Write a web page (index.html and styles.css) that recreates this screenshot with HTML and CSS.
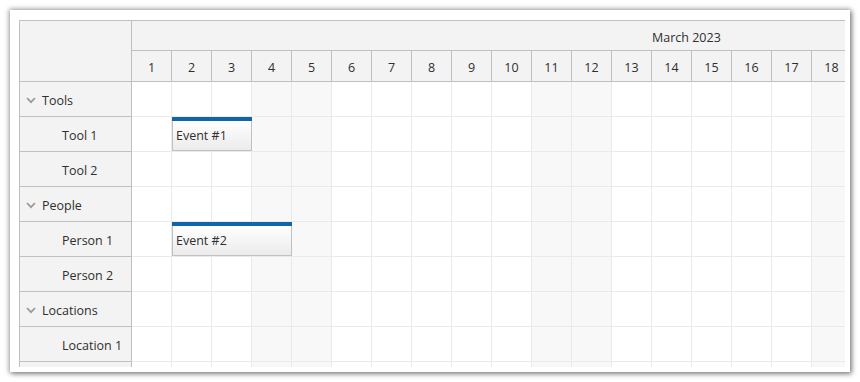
FILE: index.html
```html
<!DOCTYPE html>
<html lang="en">
<head>
    <meta charset="UTF-8">
    <title>Scheduler</title>
    <link rel="stylesheet" href="styles.css">
</head>
<body>
    <div class="card">
        <div class="scheduler">
            <div class="header">
                <div class="corner"></div>
                <div class="timeline">
                    <div class="month">March 2023</div>
                    <div class="days" id="days"></div>
                </div>
            </div>
            <div id="rows"></div>
        </div>
    </div>
    <script>
        const resources = [
            { name: 'Tools', group: true },
            { name: 'Tool 1', event: { text: 'Event #1', start: 2, days: 2 } },
            { name: 'Tool 2' },
            { name: 'People', group: true },
            { name: 'Person 1', event: { text: 'Event #2', start: 2, days: 3 } },
            { name: 'Person 2' },
            { name: 'Locations', group: true },
            { name: 'Location 1' },
            { name: '' }
        ];
        const dayCount = 18;
        const weekend = [4, 5, 11, 12, 18];
        const chevron = '<svg class="chevron" width="10" height="7" viewBox="0 0 10 7"><polyline points="1,1 5,5.2 9,1" fill="none" stroke="#9a9a9a" stroke-width="1.8"/></svg>';

        const daysEl = document.getElementById('days');
        for (let d = 1; d <= dayCount; d++) {
            const el = document.createElement('div');
            el.className = 'day';
            el.textContent = d;
            daysEl.appendChild(el);
        }

        const rowsEl = document.getElementById('rows');
        resources.forEach(r => {
            const row = document.createElement('div');
            row.className = 'row';
            const head = document.createElement('div');
            head.className = r.group ? 'rowhead group' : 'rowhead child';
            head.innerHTML = (r.group ? chevron : '') + '<span>' + r.name + '</span>';
            row.appendChild(head);

            const cells = document.createElement('div');
            cells.className = 'cells';
            for (let d = 1; d <= dayCount; d++) {
                const c = document.createElement('div');
                c.className = weekend.includes(d) ? 'cell weekend' : 'cell';
                cells.appendChild(c);
            }
            if (r.event) {
                const ev = document.createElement('div');
                ev.className = 'event';
                ev.style.left = ((r.event.start - 1) * 40) + 'px';
                ev.style.width = (r.event.days * 40) + 'px';
                ev.innerHTML = '<div class="bar"></div><div class="text">' + r.event.text + '</div>';
                cells.appendChild(ev);
            }
            row.appendChild(cells);
            rowsEl.appendChild(row);
        });
    </script>
</body>
</html>
```

FILE: styles.css
```css
body {
    margin: 0;
    padding: 10px;
    background: #fff;
    font-family: 'Open Sans', 'Noto Sans', sans-serif;
    font-size: 12.5px;
    color: #2f2f2f;
}
.card {
    width: 840px;
    height: 362px;
    box-sizing: border-box;
    padding: 10px 5px 6px 9px;
    background: #fff;
    box-shadow: 0 0 5px 1px rgba(0, 0, 0, 0.35), 2px 2px 5px rgba(0, 0, 0, 0.3);
}
.scheduler {
    height: 346px;
    overflow: hidden;
    border-left: 1px solid #c0c0c0;
    border-top: 1px solid #c0c0c0;
}
.header {
    display: flex;
}
.corner {
    flex: none;
    width: 112px;
    height: 61px;
    box-sizing: border-box;
    background: #f3f3f3;
    border-right: 1px solid #c0c0c0;
    border-bottom: 1px solid #c0c0c0;
}
.timeline {
    flex: none;
    width: 720px;
}
.month {
    height: 30px;
    box-sizing: border-box;
    padding-left: 520px;
    padding-top: 3px;
    line-height: 27px;
    background: #f3f3f3;
    border-bottom: 1px solid #c0c0c0;
    white-space: nowrap;
}
.days {
    display: flex;
}
.day {
    flex: none;
    width: 40px;
    height: 31px;
    box-sizing: border-box;
    padding-top: 2px;
    line-height: 29px;
    text-align: center;
    background: #f3f3f3;
    border-right: 1px solid #c0c0c0;
    border-bottom: 1px solid #c0c0c0;
}
.row {
    display: flex;
    height: 35px;
}
.rowhead {
    flex: none;
    width: 112px;
    box-sizing: border-box;
    display: flex;
    align-items: center;
    padding-top: 2px;
    background: #f3f3f3;
    border-right: 1px solid #c0c0c0;
    border-bottom: 1px solid #c0c0c0;
    white-space: nowrap;
}
.rowhead.group {
    padding-left: 6px;
}
.rowhead.child {
    padding-left: 42px;
}
.chevron {
    margin-right: 6px;
}
.cells {
    position: relative;
    display: flex;
    flex: none;
    width: 720px;
}
.cell {
    flex: none;
    width: 40px;
    box-sizing: border-box;
    border-right: 1px solid #eaeaea;
    border-bottom: 1px solid #eaeaea;
    background: #fff;
}
.cell.weekend {
    background: #f8f8f8;
}
.event {
    position: absolute;
    top: 0;
    height: 35px;
    box-sizing: border-box;
    display: flex;
    flex-direction: column;
}
.event .bar {
    height: 4px;
    background: #1066a8;
}
.event .text {
    flex: 1;
    padding-left: 3px;
    padding-top: 1px;
    line-height: 28px;
    background: linear-gradient(#ffffff, #ebebeb);
    border: 1px solid #c0c0c0;
    border-top: none;
    margin-bottom: 1px;
    white-space: nowrap;
}
```
